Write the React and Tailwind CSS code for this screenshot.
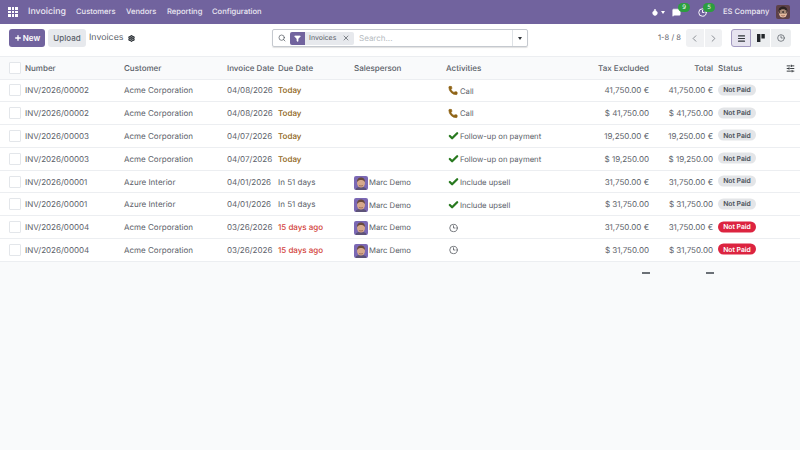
import React from "react";
import { Plus, Settings, Search, Filter, X, ChevronLeft, ChevronRight, Check, Phone, Clock3, Menu, Droplet, MessageSquare, SlidersHorizontal } from "lucide-react";

const rows = [
  ["INV/2026/00002","Acme Corporation","04/08/2026","Today","w","","call","Call","41,750.00 €","41,750.00 €",0],
  ["INV/2026/00002","Acme Corporation","04/08/2026","Today","w","","call","Call","$ 41,750.00","$ 41,750.00",0],
  ["INV/2026/00003","Acme Corporation","04/07/2026","Today","w","","check","Follow-up on payment","19,250.00 €","19,250.00 €",0],
  ["INV/2026/00003","Acme Corporation","04/07/2026","Today","w","","check","Follow-up on payment","$ 19,250.00","$ 19,250.00",0],
  ["INV/2026/00001","Azure Interior","04/01/2026","In 51 days","n","Marc Demo","check","Include upsell","31,750.00 €","31,750.00 €",0],
  ["INV/2026/00001","Azure Interior","04/01/2026","In 51 days","n","Marc Demo","check","Include upsell","$ 31,750.00","$ 31,750.00",0],
  ["INV/2026/00004","Acme Corporation","03/26/2026","15 days ago","d","Marc Demo","clock","","31,750.00 €","31,750.00 €",1],
  ["INV/2026/00004","Acme Corporation","03/26/2026","15 days ago","d","Marc Demo","clock","","$ 31,750.00","$ 31,750.00",1],
];

function Face({ size = 14 }) {
  return (
    <svg width={size} height={size} viewBox="0 0 14 14" className="shrink-0 rounded-[2px]">
      <rect width="14" height="14" fill="#7b68b4" />
      <path d="M1.5 14c.3-2.6 2.6-3.2 5.5-3.2s5.2.6 5.5 3.2z" fill="#5d5378" />
      <ellipse cx="7" cy="7" rx="4" ry="4.6" fill="#d6a88c" />
      <path d="M3 6.2C2.9 2.8 5 1.5 7 1.5S11.1 2.8 11 6.2C10 4.6 8.5 4.1 7 4.1S4 4.6 3 6.2z" fill="#6a4a3c" />
      <path d="M5 9.4c1 .7 3 .7 4 0" stroke="#8a5a48" strokeWidth=".7" fill="none" />
    </svg>
  );
}

function UserFace() {
  return (
    <svg width="14" height="14" viewBox="0 0 14 14" className="shrink-0 rounded-[2px]">
      <rect width="14" height="14" fill="#5d4148" />
      <ellipse cx="7" cy="7.6" rx="4.2" ry="5" fill="#e6bda0" />
      <path d="M2.6 6.5C2.4 2.8 4.6 1.4 7 1.4s4.6 1.4 4.4 5.1C10.3 4.8 8.6 4.4 7 4.4S3.7 4.8 2.6 6.5z" fill="#2c2422" />
      <rect x="3.5" y="6" width="3" height="2" fill="none" stroke="#2c2422" strokeWidth=".7" />
      <rect x="7.5" y="6" width="3" height="2" fill="none" stroke="#2c2422" strokeWidth=".7" />
      <path d="M5.3 10.4c1 .7 2.4 .7 3.4 0" stroke="#8a4a3c" strokeWidth=".7" fill="none" />
    </svg>
  );
}

function Activity({ kind }) {
  if (kind === "call") return <Phone className="w-[10px] h-[10px] text-[#8f6416] mr-[2px] shrink-0" fill="currentColor" strokeWidth={1.5} />;
  if (kind === "check") return <Check className="w-[11px] h-[11px] text-[#28791f] mr-[1px] shrink-0" strokeWidth={5} />;
  return <Clock3 className="ml-[1px] w-[9px] h-[9px] text-[#4b4f55] shrink-0" strokeWidth={2} />;
}

function Row({ r }) {
  const due = r[4] === "w" ? "text-[#8f6416] font-medium" : r[4] === "d" ? "text-[#d23f3a] font-medium" : "text-[#5a6068]";
  return (
    <div className="flex items-center h-[22.8px] border-b border-[#eceef1] text-[8px] text-[#5a6068] shrink-0 bg-white">
      <div className="w-[25px] pl-[9px] shrink-0">
        <div className="w-[12px] h-[12px] border border-[#e3e6ea] bg-white rounded-[1px]" />
      </div>
      <div className="w-[99px] shrink-0">{r[0]}</div>
      <div className="w-[103px] shrink-0">{r[1]}</div>
      <div className="w-[51px] shrink-0">{r[2]}</div>
      <div className={`w-[76px] shrink-0 ${due}`}>{r[3]}</div>
      <div className="w-[92px] shrink-0 flex items-center gap-[1px] translate-y-[1px] text-[7.7px]">
        {r[5] && <Face />}
        {r[5] && <span>{r[5]}</span>}
      </div>
      <div className="w-[140px] shrink-0 pl-[2px] flex items-center translate-y-[0.5px] text-[7.7px]">
        <Activity kind={r[6]} />
        {r[7] && <span>{r[7]}</span>}
      </div>
      <div className="w-[63px] shrink-0 text-right">{r[8]}</div>
      <div className="w-[64px] shrink-0 text-right">{r[9]}</div>
      <div className="pl-[5px] -translate-y-[0.5px]">
        <span className={`flex items-center justify-center w-[38px] h-[11px] rounded-full text-[6.8px] font-semibold ${r[10] ? "bg-[#dc2440] text-white" : "bg-[#e3e5e8] text-[#4a5058]"}`}>Not Paid</span>
      </div>
    </div>
  );
}

export default function App() {
  return (
    <div className="w-[800px] h-[450px] overflow-hidden bg-[#f9fafb] flex flex-col font-['Inter','Noto_Sans',sans-serif] text-[#5a6068] [text-rendering:geometricPrecision]">
      <header className="h-[24px] bg-[#71639e] flex items-center text-white shrink-0">
        <div className="pl-[8px] w-[28px] shrink-0">
          <div className="grid grid-cols-3 gap-[1px] w-[10px]">
            {Array.from({ length: 9 }).map((_, i) => <span key={i} className="w-[2.6px] h-[2.6px] bg-white" />)}
          </div>
        </div>
        <span className="text-[8.8px] font-medium w-[48px] shrink-0 text-[#ece9f3]">Invoicing</span>
        <nav className="flex text-[7.6px] font-medium text-[#ece9f3]">
          <span className="w-[50px]">Customers</span>
          <span className="w-[41px]">Vendors</span>
          <span className="w-[45px]">Reporting</span>
          <span>Configuration</span>
        </nav>
        <div className="ml-auto flex items-center pr-[10px]">
          <Droplet className="w-[8px] h-[8px] mr-[2px]" fill="white" strokeWidth={2} />
          <span className="w-0 h-0 border-x-[2.5px] border-x-transparent border-t-[3px] border-t-white mr-[7px]" />
          <div className="relative mr-[17px]">
            <MessageSquare className="w-[9px] h-[9px]" fill="white" strokeWidth={1.5} />
            <span className="absolute -top-[5px] left-[6px] w-[12px] h-[9px] rounded-full bg-[#2c9e3f] text-[6px] flex items-center justify-center">9</span>
          </div>
          <div className="relative mr-[16px]">
            <Clock3 className="w-[9px] h-[9px]" strokeWidth={2.5} />
            <span className="absolute -top-[5px] left-[5px] w-[12px] h-[9px] rounded-full bg-[#2c9e3f] text-[6px] flex items-center justify-center">5</span>
          </div>
          <span className="text-[7.6px] font-medium w-[45px] mr-[8px] text-[#ece9f3] whitespace-nowrap">ES Company</span>
          <UserFace />
        </div>
      </header>

      <div className="h-[33px] pt-[5px] flex items-start border-b border-[#eceef1] shrink-0 bg-white">
        <div className="pl-[9px] flex items-center w-[272px] h-[18px] shrink-0">
          <button className="w-[36px] h-[18px] rounded-[3px] bg-[#71639e] text-white text-[8px] font-semibold flex items-center justify-center gap-[1px]">
            <Plus className="w-[8px] h-[8px]" strokeWidth={4} />New
          </button>
          <button className="ml-[3px] w-[38px] h-[18px] rounded-[3px] bg-[#e7e9ed] text-[8px] font-medium text-[#5a6068]">Upload</button>
          <span className="ml-[3px] text-[8.8px]">Invoices</span>
          <Settings className="w-[7px] h-[7px] ml-[5px] text-[#2f3439]" strokeWidth={4} />
        </div>
        <div className="w-[256px] h-[18px] border border-[#c5c9cf] rounded-[2px] flex items-center shrink-0 shadow-[0_1px_1px_rgba(0,0,0,0.12)]">
          <Search className="w-[8px] h-[8px] ml-[5px] text-[#4a5058]" strokeWidth={2} />
          <span className="ml-[4px] w-[15px] h-[13px] rounded-l-[2px] bg-[#71639e] flex items-center justify-center">
            <Filter className="w-[7px] h-[7px] text-white" fill="white" />
          </span>
          <span className="h-[13px] w-[49px] bg-[#e7e9ed] rounded-r-[2px] flex items-center text-[7px] pl-[4px] text-[#5a6068]">
            Invoices<X className="w-[8px] h-[8px] ml-[6px] text-[#4a5058]" strokeWidth={2} />
          </span>
          <span className="ml-[5px] text-[8px] text-[#b5bac0]">Search...</span>
          <span className="ml-auto w-[15px] h-full border-l border-[#dee2e6] flex items-center justify-center">
            <span className="w-0 h-0 border-x-[2.5px] border-x-transparent border-t-[3px] border-t-[#2f3439]" />
          </span>
        </div>
        <span className="ml-[130px] h-[18px] flex items-center text-[7.6px] text-[#5a6068] w-[27px] shrink-0 whitespace-nowrap">1-8 / 8</span>
        <div className="ml-[1px] flex w-[36px] h-[18px] rounded-[3px] bg-[#f0f1f3] shrink-0 text-[#5a6068]">
          <span className="flex-1 flex items-center justify-center border-r border-white"><ChevronLeft className="w-[11px] h-[11px]" strokeWidth={1.5} /></span>
          <span className="flex-1 flex items-center justify-center"><ChevronRight className="w-[11px] h-[11px]" strokeWidth={1.5} /></span>
        </div>
        <div className="ml-[9px] flex h-[18px] shrink-0">
          <span className="w-[20px] rounded-l-[3px] bg-[#e6e3ef] border border-[#a49bc2] flex items-center justify-center"><Menu className="w-[9px] h-[9px] text-[#2f3439]" strokeWidth={3} /></span>
          <span className="w-[20px] bg-[#eceef0] border-r border-white flex items-center justify-center">
            <svg width="8" height="8" viewBox="0 0 8 8"><rect width="3.4" height="8" fill="#22262a" /><rect x="4.4" width="3.4" height="4.5" fill="#22262a" /></svg>
          </span>
          <span className="w-[20px] rounded-r-[3px] bg-[#eceef0] flex items-center justify-center"><Clock3 className="w-[8px] h-[8px] text-[#4a5058]" strokeWidth={2} /></span>
        </div>
      </div>

      <div className="h-[22.5px] pt-[0.5px] bg-[#f9fafb] border-b border-[#eceef1] flex items-center text-[8px] font-medium text-[#5a6068] shrink-0">
        <div className="w-[25px] pl-[9px] shrink-0"><div className="w-[12px] h-[12px] border border-[#e3e6ea] bg-white rounded-[1px]" /></div>
        <div className="w-[99px] shrink-0">Number</div>
        <div className="w-[103px] shrink-0">Customer</div>
        <div className="w-[51px] shrink-0">Invoice Date</div>
        <div className="w-[76px] shrink-0">Due Date</div>
        <div className="w-[92px] shrink-0">Salesperson</div>
        <div className="w-[140px] shrink-0">Activities</div>
        <div className="w-[63px] shrink-0 text-right">Tax Excluded</div>
        <div className="w-[64px] shrink-0 text-right">Total</div>
        <div className="pl-[5px]">Status</div>
        <SlidersHorizontal className="ml-auto mr-[5px] w-[9px] h-[9px] text-[#2f3439]" strokeWidth={2.5} />
      </div>

      {rows.map((r, i) => <Row key={i} r={r} />)}

      <div className="h-[22px] flex items-center shrink-0">
        <span className="ml-[642px] w-[8px] h-[1.5px] bg-[#6b7076]" />
        <span className="ml-[56px] w-[8px] h-[1.5px] bg-[#6b7076]" />
      </div>
    </div>
  );
}
